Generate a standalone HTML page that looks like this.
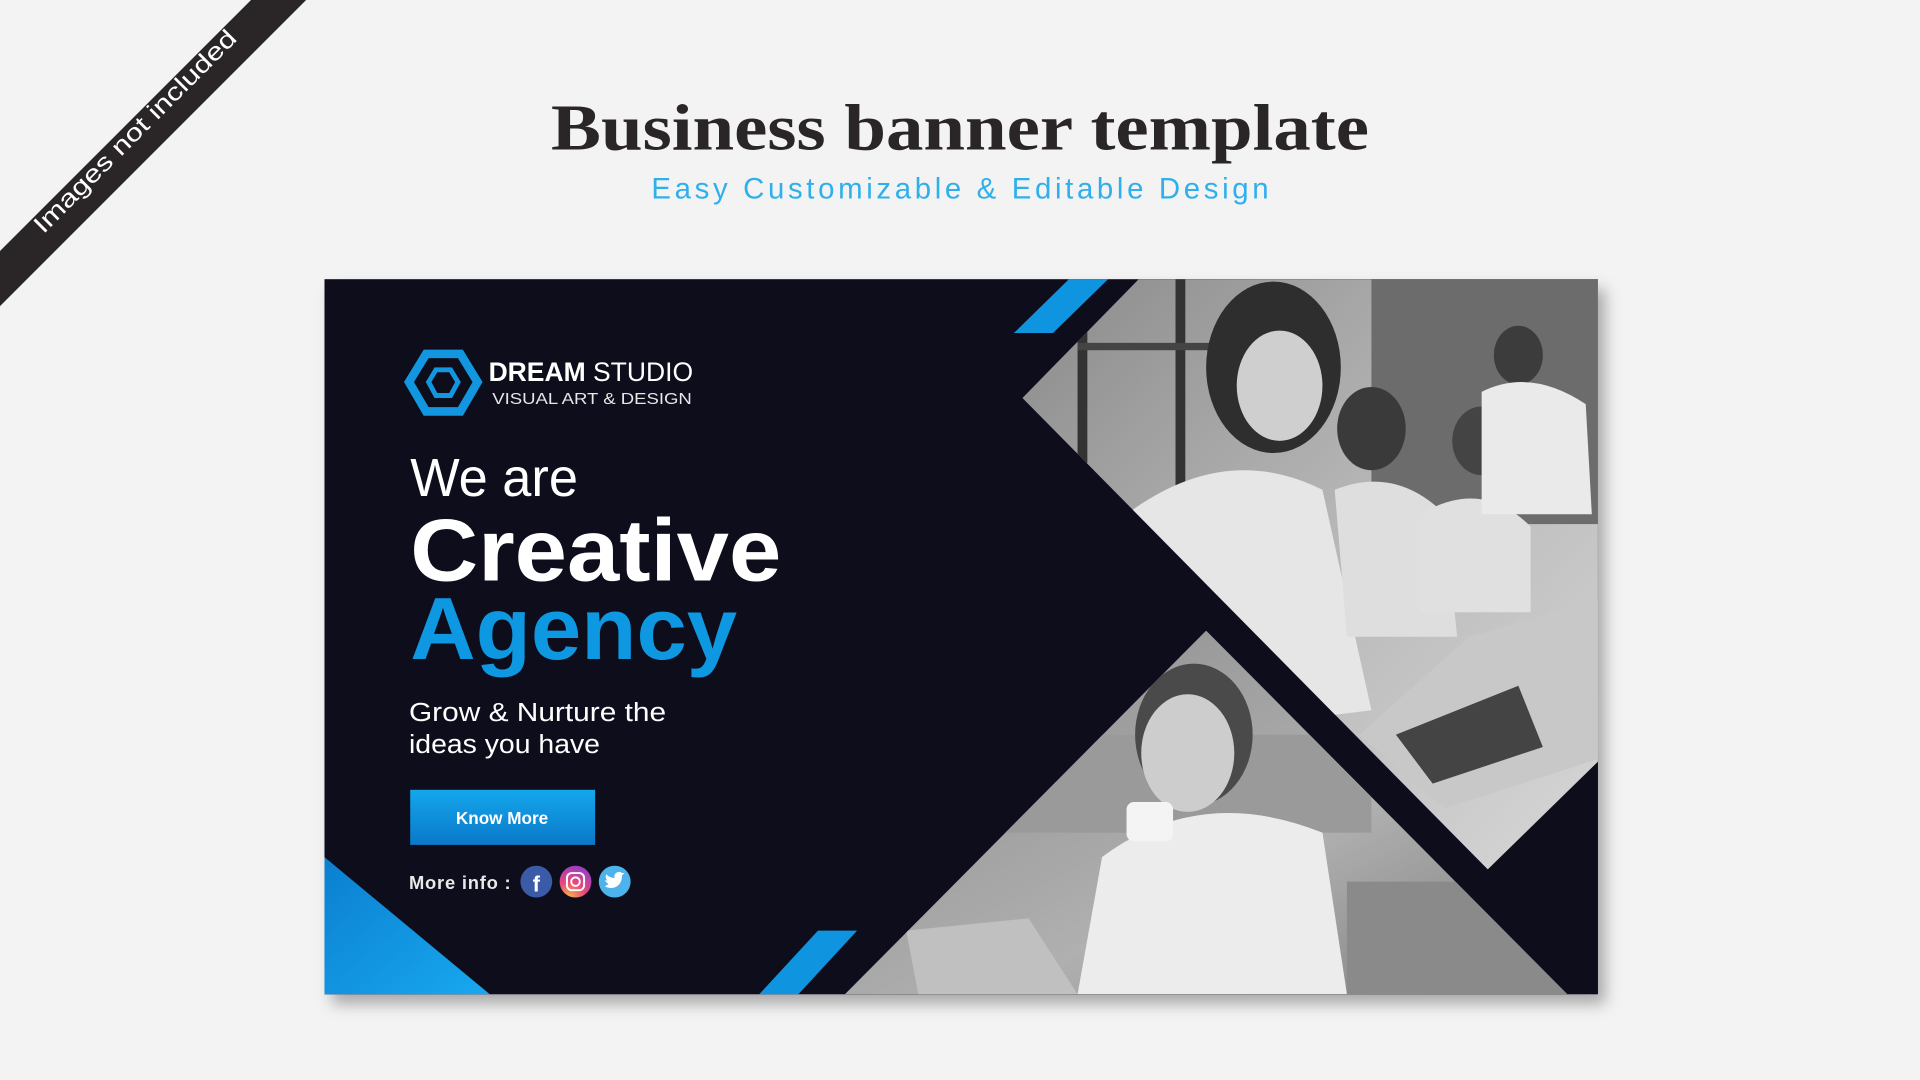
<!DOCTYPE html>
<html><head><meta charset="utf-8"><style>
html,body{margin:0;padding:0;background:#f3f3f3;width:1920px;height:1080px;overflow:hidden}
svg{display:block}
</style></head><body>
<svg width="1920" height="1080" viewBox="0 0 1568 882" xmlns="http://www.w3.org/2000/svg">
<defs>
<linearGradient id="btn" x1="0" y1="0" x2="0" y2="1"><stop offset="0" stop-color="#14a7ec"/><stop offset="1" stop-color="#0a78c8"/></linearGradient>
<linearGradient id="tri" x1="0" y1="0" x2="1" y2="1"><stop offset="0" stop-color="#0b7fd0"/><stop offset="1" stop-color="#18a8f0"/></linearGradient>
<linearGradient id="p1" x1="0" y1="0" x2="1" y2="1"><stop offset="0" stop-color="#8a8a8a"/><stop offset="0.5" stop-color="#b8b8b8"/><stop offset="1" stop-color="#d8d8d8"/></linearGradient>
<linearGradient id="p2" x1="0" y1="0" x2="1" y2="1"><stop offset="0" stop-color="#8a8a8a"/><stop offset="0.6" stop-color="#b0b0b0"/><stop offset="1" stop-color="#7a7a7a"/></linearGradient>
<radialGradient id="ig" cx="0.3" cy="1" r="1"><stop offset="0" stop-color="#f7b64a"/><stop offset="0.5" stop-color="#e8487a"/><stop offset="1" stop-color="#9b3fc0"/></radialGradient>
<filter id="sh" x="-5%" y="-5%" width="115%" height="120%"><feDropShadow dx="6" dy="8" stdDeviation="6" flood-color="#000" flood-opacity="0.3"/></filter>
<clipPath id="c1"><polygon points="930,228 1305,228 1305,622 1215,710 835,325"/></clipPath>
<clipPath id="c2"><polygon points="690,812 985,515 1280,812"/></clipPath>
</defs>
<rect width="1568" height="882" fill="#f3f3f3"/>
<!-- ribbon -->
<polygon points="0,205 205,0 250,0 0,250" fill="#2a2628"/>
<text x="0" y="7" transform="translate(110,107) rotate(-45)" text-anchor="middle" font-family="Liberation Sans, sans-serif" font-size="20" fill="#fff" textLength="225" lengthAdjust="spacingAndGlyphs">Images not included</text>
<!-- title -->
<text x="784" y="122" text-anchor="middle" font-family="Liberation Serif, serif" font-weight="bold" font-size="54" fill="#2a2628" textLength="668" lengthAdjust="spacingAndGlyphs">Business banner template</text>
<text x="784" y="162" text-anchor="middle" font-family="Liberation Sans, sans-serif" font-size="24" fill="#2fb0ec" textLength="504">Easy Customizable &amp; Editable Design</text>
<!-- banner -->
<g filter="url(#sh)"><rect x="265" y="228" width="1040" height="584" fill="#100c1c"/></g>
<!-- top photo -->
<g clip-path="url(#c1)">
<rect x="830" y="228" width="480" height="490" fill="url(#p1)"/>
<rect x="880" y="228" width="8" height="150" fill="#333"/><rect x="960" y="228" width="8" height="200" fill="#333"/>
<rect x="880" y="280" width="120" height="6" fill="#444"/>
<rect x="1120" y="228" width="185" height="200" fill="#6c6c6c"/>
<ellipse cx="1040" cy="300" rx="55" ry="70" fill="#2e2e2e"/>
<ellipse cx="1045" cy="315" rx="35" ry="45" fill="#cfcfcf"/>
<path d="M920,420 Q1000,360 1080,400 L1120,580 L960,600 Z" fill="#e6e6e6"/>
<ellipse cx="1120" cy="350" rx="28" ry="34" fill="#3a3a3a"/>
<path d="M1090,400 Q1140,380 1180,420 L1190,520 L1100,520 Z" fill="#dedede"/>
<ellipse cx="1210" cy="360" rx="24" ry="28" fill="#444"/>
<path d="M1160,420 Q1210,390 1250,430 L1250,500 L1160,500 Z" fill="#e0e0e0"/>
<ellipse cx="1240" cy="290" rx="20" ry="24" fill="#3c3c3c"/>
<path d="M1210,320 Q1250,300 1295,330 L1300,420 L1210,420 Z" fill="#eaeaea"/>
<polygon points="1110,600 1200,520 1305,490 1305,620 1180,660" fill="#c8c8c8"/>
<polygon points="1140,600 1240,560 1260,610 1170,640" fill="#444"/>
</g>
<!-- bottom photo -->
<g clip-path="url(#c2)">
<rect x="690" y="515" width="590" height="300" fill="url(#p2)"/>
<rect x="820" y="600" width="300" height="80" fill="#9a9a9a"/>
<ellipse cx="975" cy="600" rx="48" ry="58" fill="#4a4a4a"/>
<ellipse cx="970" cy="615" rx="38" ry="48" fill="#cdcdcd"/>
<path d="M900,700 Q980,640 1080,680 L1100,812 L880,812 Z" fill="#ececec"/>
<rect x="920" y="655" width="38" height="32" rx="6" fill="#f4f4f4"/>
<polygon points="740,760 840,750 880,812 750,812" fill="#c0c0c0"/>
<rect x="1100" y="720" width="180" height="92" fill="#8a8a8a"/>
</g>
<!-- blue shapes -->
<polygon points="828,272 873,228 905,228 860,272" fill="#0f94e0"/>
<polygon points="620,812 668,760 700,760 652,812" fill="#0f94e0"/>
<polygon points="265,700 265,812 400,812" fill="url(#tri)"/>
<!-- logo -->
<polygon points="348,289 376,289 390,312 376,336 348,336 334,312" fill="none" stroke="#1296e0" stroke-width="7"/>
<polygon points="356,302 368,302 374,312 368,323 356,323 350,312" fill="none" stroke="#1296e0" stroke-width="4"/>
<text x="399" y="311" font-family="Liberation Sans, sans-serif" font-size="22" fill="#fff" textLength="167" lengthAdjust="spacingAndGlyphs"><tspan font-weight="bold">DREAM</tspan> STUDIO</text>
<text x="402" y="330" font-family="Liberation Sans, sans-serif" font-size="13" fill="#e6e6e6" textLength="163" lengthAdjust="spacingAndGlyphs">VISUAL ART &amp; DESIGN</text>
<text x="335" y="405" font-family="Liberation Sans, sans-serif" font-size="44" fill="#fff" textLength="137" lengthAdjust="spacingAndGlyphs">We are</text>
<text x="335" y="474" font-family="Liberation Sans, sans-serif" font-weight="bold" font-size="72" fill="#fff" textLength="303" lengthAdjust="spacingAndGlyphs">Creative</text>
<text x="335" y="538" font-family="Liberation Sans, sans-serif" font-weight="bold" font-size="72" fill="#0e98e2" textLength="267" lengthAdjust="spacingAndGlyphs">Agency</text>
<text x="334" y="589" font-family="Liberation Sans, sans-serif" font-size="21" fill="#fff" textLength="210" lengthAdjust="spacingAndGlyphs">Grow &amp; Nurture the</text>
<text x="334" y="615" font-family="Liberation Sans, sans-serif" font-size="21" fill="#fff" textLength="156" lengthAdjust="spacingAndGlyphs">ideas you have</text>
<rect x="335" y="645" width="151" height="45" fill="url(#btn)"/>
<text x="410" y="673" text-anchor="middle" font-family="Liberation Sans, sans-serif" font-weight="bold" font-size="14" fill="#fff">Know More</text>
<text x="334" y="726" font-family="Liberation Sans, sans-serif" font-weight="bold" font-size="15" fill="#e8e8e8" textLength="83">More info :</text>
<circle cx="438" cy="720" r="13" fill="#3b5ba8"/>
<text x="438" y="728" text-anchor="middle" font-family="Liberation Sans, sans-serif" font-weight="bold" font-size="18" fill="#fff">f</text>
<circle cx="470" cy="720" r="13" fill="url(#ig)"/>
<rect x="463" y="713" width="14" height="14" rx="4" fill="none" stroke="#fff" stroke-width="1.6"/><circle cx="470" cy="720" r="3.5" fill="none" stroke="#fff" stroke-width="1.6"/>
<circle cx="502" cy="720" r="13" fill="#4db3ec"/>
<path d="M494,724 q6,3 11,-1 q3,-3 3,-8 l2,-2 l-2,0 q-2,-2 -5,0 q-2,2 -1,4 q-4,0 -7,-3 q-1,3 1,5 l-2,0 q1,2 3,3 q-2,1 -3,2 z" fill="#fff"/>
</svg>
</body></html>
